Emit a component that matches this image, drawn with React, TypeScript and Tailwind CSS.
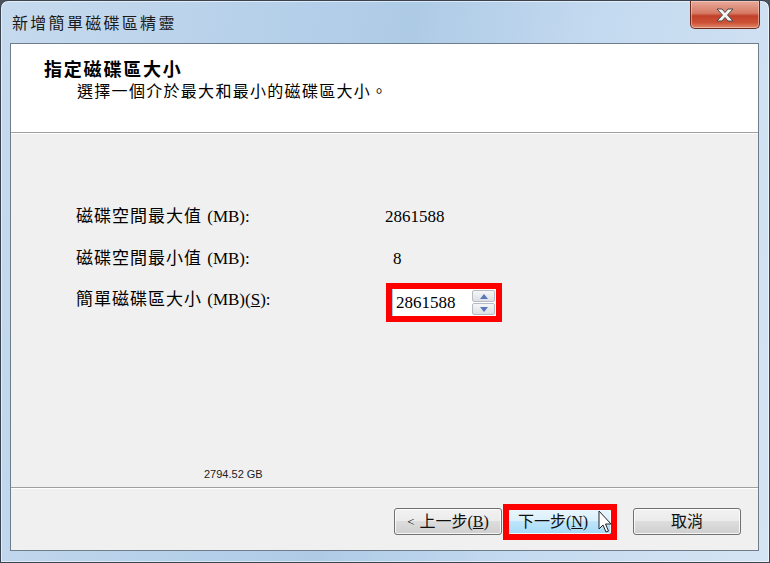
import React from "react";

const CJK = { fontFamily: '"Noto Sans CJK TC", "Noto Sans CJK SC", sans-serif' };
const MIX = { fontFamily: '"Liberation Serif", "Noto Sans CJK TC", serif' };

function Btn({ children, hot }: { children: React.ReactNode; hot?: boolean }) {
  return (
    <div
      className={
        "w-[108px] h-[27px] rounded-[3px] border flex items-center justify-center text-[16px] text-[#111] shadow-[inset_0_0_0_1px_rgba(255,255,255,0.8)] " +
        (hot
          ? "border-[#3c7fb1] bg-[linear-gradient(to_bottom,#eaf6fd_0%,#d9f0fc_49%,#bee6fd_50%,#a7d9f5_100%)]"
          : "border-[#707070] bg-[linear-gradient(to_bottom,#f2f2f2_0%,#ebebeb_49%,#dddddd_50%,#cfcfcf_100%)]")
      }
      style={MIX}
    >
      {children}
    </div>
  );
}

export default function App() {
  return (
    <div className="w-[770px] h-[563px] bg-[#4a525c]">
      <div className="w-[770px] h-[563px] flex flex-col rounded-t-[8px] border border-[#3a434e] bg-[linear-gradient(100deg,#c6daee_0%,#b4cfe9_35%,#aecbe6_48%,#c4daf0_70%,#d5e4f3_100%)] shadow-[inset_0_0_0_1px_rgba(255,255,255,0.55)]">
        {/* title bar */}
        <div className="h-[42px] flex items-start justify-between pl-[11px] pr-[9px]">
          <div className="mt-[10px] text-[16px] tracking-[2.3px] text-[#1b1b1b] leading-[22px]" style={CJK}>
            新增簡單磁碟區精靈
          </div>
          <div className="w-[70px] h-[28px] rounded-b-[5px] border border-t-0 border-[#6b2a20] bg-[linear-gradient(to_bottom,#e8a99a_0%,#d77a64_45%,#c1402a_55%,#cc5236_80%,#e08a6c_100%)] flex items-center justify-center shadow-[inset_0_0_0_1px_rgba(255,220,210,0.5)]">
            <svg width="22" height="16" viewBox="0 0 22 16">
              <path d="M3 2 L8 2 L11 5.5 L14 2 L19 2 L13.5 8 L19 14 L14 14 L11 10.5 L8 14 L3 14 L8.5 8 Z" fill="#f4f4f4" stroke="#4a4a4a" strokeWidth="1" strokeLinejoin="round" />
            </svg>
          </div>
        </div>
        {/* body with side frames */}
        <div className="flex-1 flex pl-[9px] pr-[10px] pb-[11px]">
          <div className="flex-1 flex flex-col border border-[#6f7c8a] bg-[#f0f0f0]">
            {/* header */}
            <div className="h-[88px] bg-white pl-[33px] pt-[13px]">
              <div className="text-[18px] leading-[22px] font-bold tracking-[1.8px] text-black" style={CJK}>
                指定磁碟區大小
              </div>
              <div className="pl-[33px] text-[16px] leading-[22px] tracking-[1.3px] text-black" style={CJK}>
                選擇一個介於最大和最小的磁碟區大小。
              </div>
            </div>
            <div className="h-[2px] border-t border-[#a0a0a0] border-b border-b-white" />
            {/* main */}
            <div className="flex-1 flex flex-col pl-[65px] pt-[62px]">
              <div className="h-[42px] flex items-center text-[17px] text-black" style={MIX}>
                <div className="w-[309px] tracking-[1px]">磁碟空間最大值 <span className="tracking-normal">(MB):</span></div>
                <div>2861588</div>
              </div>
              <div className="h-[42px] flex items-center text-[17px] text-black" style={MIX}>
                <div className="w-[309px] tracking-[1px]">磁碟空間最小值 <span className="tracking-normal">(MB):</span></div>
                <div className="pl-[8px]">8</div>
              </div>
              <div className="h-[42px] flex items-center text-[17px] text-black" style={MIX}>
                <div className="w-[309px] tracking-[1px] -mt-[2px]">
                  簡單磁碟區大小 <span className="tracking-normal">(MB)(<span className="underline">S</span>):</span>
                </div>
                <div className="ml-[1px] mt-[3px] border-[6px] border-[#ff0000] flex bg-white">
                  <div className="w-[80px] h-[27px] border-l border-[#aac4e6] flex items-center pl-[3px] text-[17px]">
                    2861588
                  </div>
                  <div className="w-[24px] h-[27px] flex flex-col justify-center gap-[1px] pr-[1px]">
                    <div className="h-[12px] rounded-[2px] border border-[#b6bcc6] bg-[linear-gradient(to_bottom,#f6f6f6,#dcdfe4)] flex items-center justify-center">
                      <svg width="8" height="5" viewBox="0 0 8 5"><path d="M0 5 L4 0 L8 5 Z" fill="#5677b9" /></svg>
                    </div>
                    <div className="h-[12px] rounded-[2px] border border-[#b6bcc6] bg-[linear-gradient(to_bottom,#f6f6f6,#dcdfe4)] flex items-center justify-center">
                      <svg width="8" height="5" viewBox="0 0 8 5"><path d="M0 0 L8 0 L4 5 Z" fill="#5677b9" /></svg>
                    </div>
                  </div>
                </div>
              </div>
              <div className="mt-auto pb-[6px] pl-[128px] text-[11px] leading-[14px] text-[#222]" style={{ fontFamily: '"Liberation Sans", sans-serif' }}>
                2794.52 GB
              </div>
            </div>
            <div className="h-[2px] border-t border-[#a0a0a0] border-b border-b-white" />
            {/* footer */}
            <div className="h-[61px] flex items-start justify-end pt-[19px] pr-[17px]">
              <Btn>
                <span className="text-[13px] mr-[5px]">&lt;</span>上一步(<span className="underline">B</span>)
              </Btn>
              <div className="relative ml-[2px]">
                <Btn hot>
                  <span className="mr-[10px]">下一步(<span className="underline">N</span>)</span>
                </Btn>
                <svg className="absolute left-[94px] top-[2px]" width="14" height="24" viewBox="0 0 14 24">
                  <path d="M1 1 L1 19 L5 15 L8 22 L10.5 21 L7.5 14 L13 14 Z" fill="#fff" stroke="#222" strokeWidth="1" strokeLinejoin="round" />
                </svg>
                <div className="absolute -left-[1px] -top-[4px] w-[114px] h-[36px] border-[6px] border-[#ff0000]" />
              </div>
              <div className="ml-[21px]">
                <Btn>取消</Btn>
              </div>
            </div>
          </div>
        </div>
      </div>
    </div>
  );
}
